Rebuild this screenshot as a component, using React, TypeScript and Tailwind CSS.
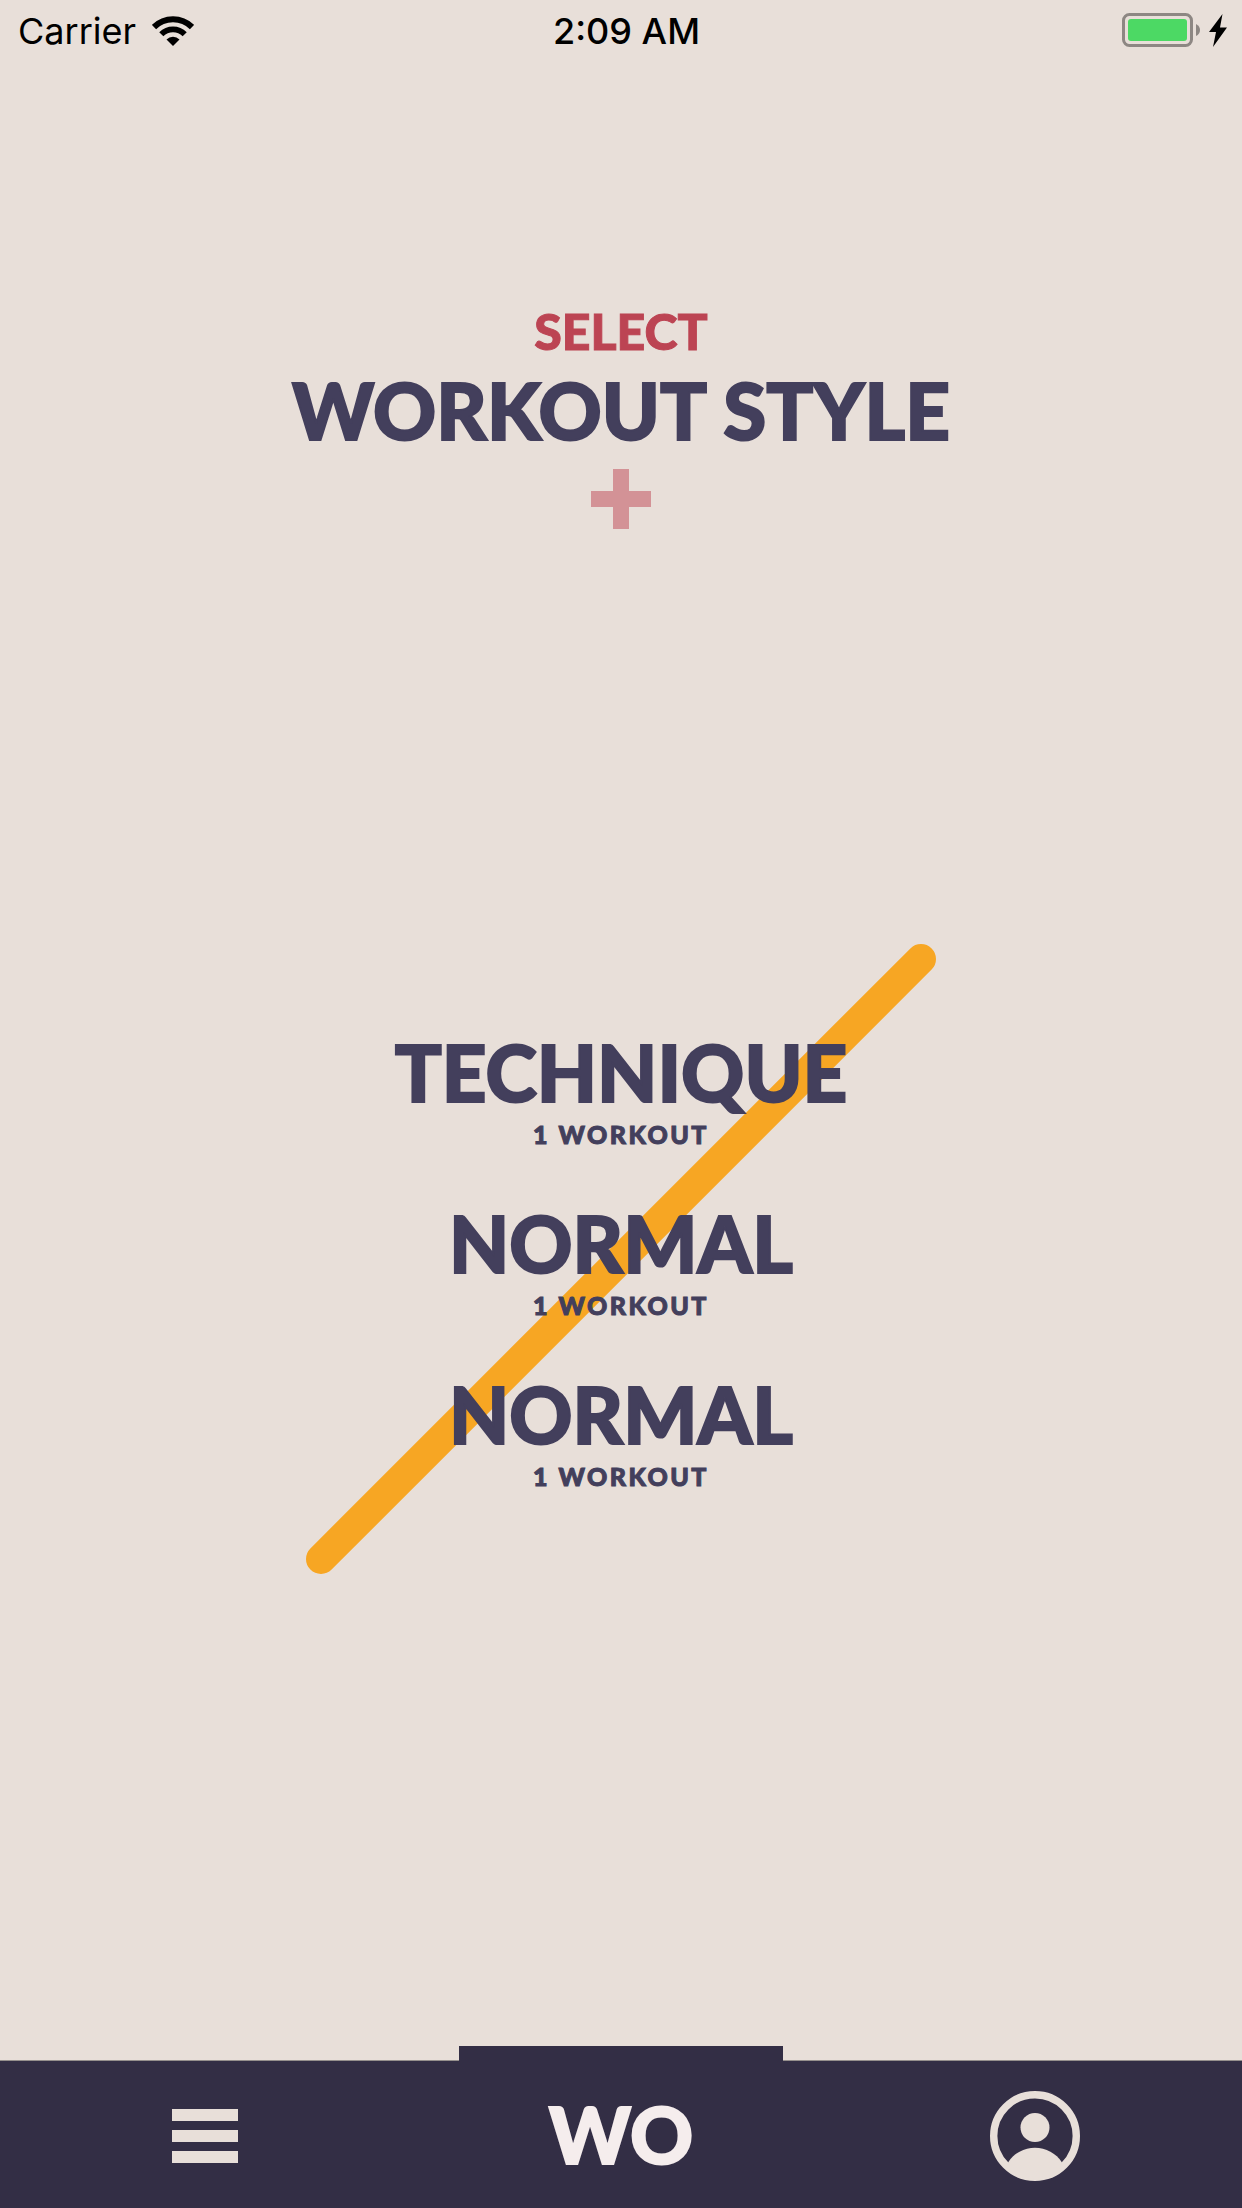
const styles = [
  { id: 1, name: "TECHNIQUE", count: "1 WORKOUT" },
  { id: 2, name: "NORMAL", count: "1 WORKOUT" },
  { id: 3, name: "NORMAL", count: "1 WORKOUT" },
];

function StatusBar() {
  return (
    <header className="grid h-[62px] grid-cols-3 items-center pl-[18px] pr-[15px] font-['Inter',sans-serif] text-[36px] leading-[60px] font-normal text-black">
      <div className="flex items-center gap-4">
        <span>Carrier</span>
        <svg className="h-[30px] w-[42px]" viewBox="0 0 42 30" aria-label="Wi-Fi">
          <g fill="none" stroke="#000">
            <path d="M2 11A27 27 0 0 1 40 11" strokeWidth="6" />
            <path d="M9.300 18.300A16.500 16.500 0 0 1 32.700 18.300" strokeWidth="5.800" />
          </g>
          <path d="M21 30L14.500 23.500A9.200 9.200 0 0 1 27.500 23.500Z" />
        </svg>
      </div>
      <time className="justify-self-center pl-2 font-medium">2:09 AM</time>
      <svg className="h-[36px] w-[106px] justify-self-end" viewBox="0 0 106 36" aria-label="Battery charging">
        <rect x="2.500" y="1.500" width="68" height="31" rx="6" fill="none" stroke="#8d8783" strokeWidth="3" />
        <rect x="7" y="6" width="59" height="22" rx="3" fill="#4cd964" />
        <path d="M75 11Q79 13 79 17T75 23Z" fill="#8d8783" />
        <path d="M101.500 1L88 19H95L92 34L106 14.500H99Z" />
      </svg>
    </header>
  );
}

export default function App() {
  return (
    <div className="flex min-h-screen flex-col bg-[#e8dfd9] font-['Lato',sans-serif] font-black text-[#433f5c]">
      <StatusBar />
      <main className="flex flex-1 flex-col items-center">
        <h1 className="mt-[239px] flex flex-col items-center gap-[9px] text-center">
          <span className="text-[50px] leading-[60px] text-[#bc4453] [-webkit-text-stroke:1px_currentColor]">
            SELECT
          </span>
          <span className="text-[78px] leading-[80px] [-webkit-text-stroke:2px_currentColor]">WORKOUT STYLE</span>
        </h1>
        <button type="button" aria-label="Add workout style" className="mt-[19px]">
          <svg className="size-[60px]" viewBox="0 0 60 60" fill="#d39296">
            <path d="M22 0H38V22H60V38H38V60H22V38H0V22H22Z" />
          </svg>
        </button>
        <div className="relative mt-[473px] flex justify-center">
          <svg
            className="absolute top-1/2 left-1/2 size-[630px] -translate-x-1/2 -translate-y-1/2"
            viewBox="0 0 630 630"
            aria-hidden="true"
          >
            <path d="M15 615L615 15" stroke="#f7a623" strokeWidth="30" strokeLinecap="round" />
          </svg>
          <ul className="relative">
            {styles.map((style) => (
              <li key={style.id}>
                <button type="button" className="flex w-full flex-col items-center gap-1.5 pt-[30px] pb-[23px]">
                  <span className="text-[78px] leading-[80px] [-webkit-text-stroke:2px_currentColor]">
                    {style.name}
                  </span>
                  <span className="text-[25px] leading-8 tracking-widest [-webkit-text-stroke:1px_currentColor]">
                    {style.count}
                  </span>
                </button>
              </li>
            ))}
          </ul>
        </div>
      </main>
      <nav className="grid h-[148px] grid-cols-3 border-t border-[#96908d] bg-[#332e45]">
        <button type="button" aria-label="Menu" className="flex items-center justify-center pt-[3px] pr-1">
          <svg className="h-[54px] w-[66px]" viewBox="0 0 66 54" fill="#e8dfd9">
            <path d="M0 0H66V12H0ZM0 21H66V33H0ZM0 42H66V54H0Z" />
          </svg>
        </button>
        <button
          type="button"
          className="-mt-[15px] flex w-[324px] items-center justify-center justify-self-center bg-[#332e45] pt-[14px] text-[78px] leading-[80px] text-[#f5eded] [-webkit-text-stroke:2px_currentColor]"
        >
          WO
        </button>
        <button type="button" aria-label="Profile" className="flex items-center justify-center pt-[3px]">
          <svg className="size-[90px]" viewBox="0 0 90 90" fill="#e8dfd9">
            <circle cx="45" cy="45" r="41.300" fill="none" stroke="#e8dfd9" strokeWidth="7.400" />
            <circle cx="45" cy="36.500" r="14.500" />
            <path d="M18 71.500A32 32 0 0 1 72 71.500L68 80L45 88L22 80Z" />
          </svg>
        </button>
      </nav>
    </div>
  );
}
